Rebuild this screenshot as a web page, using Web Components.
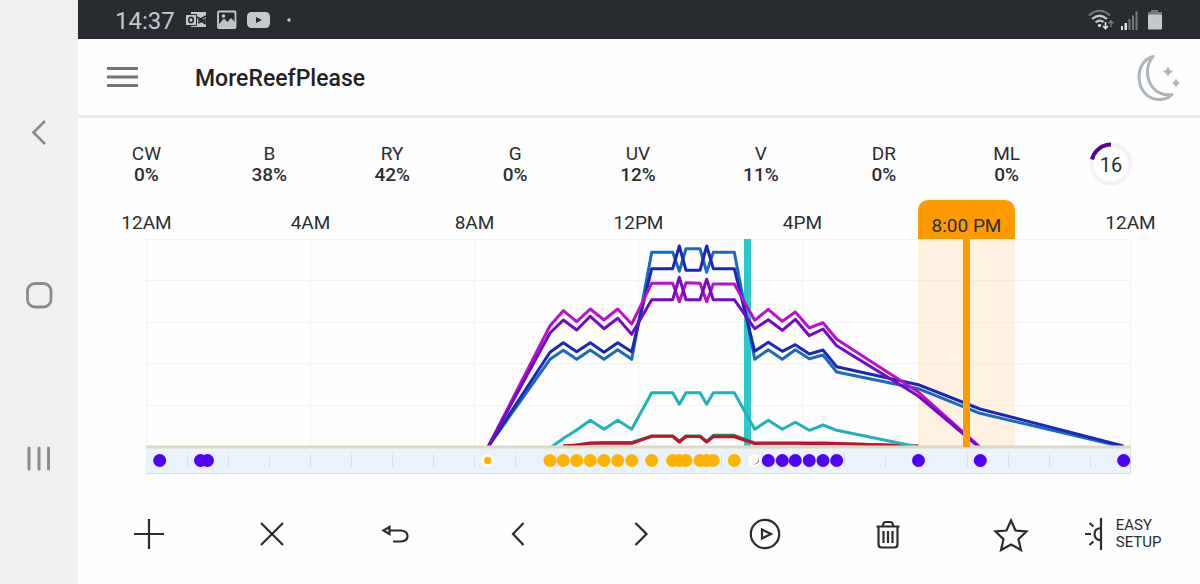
<!DOCTYPE html>
<html lang="en">
<head>
<meta charset="utf-8">
<meta name="viewport" content="width=device-width, initial-scale=1">
<title>MoreReefPlease</title>
<style>
  body { margin: 0; font-family: Roboto, "Liberation Sans", sans-serif; color: #2b2d31; background: #fefefe; }
</style>
</head>
<body>
<reef-app></reef-app>

<script>
const RESET = `
  *, *::before, *::after { box-sizing: border-box; }
  button { appearance: none; border: 0; background: none; padding: 0; margin: 0; font: inherit; color: inherit; cursor: pointer; }
  svg { display: block; }
`;

function define(name, html, after) {
  const template = document.createElement('template');
  template.innerHTML = html;
  customElements.define(name, class extends HTMLElement {
    constructor() {
      super();
      this.attachShadow({ mode: 'open' }).append(template.content.cloneNode(true));
    }
    connectedCallback() { if (after) after(this.shadowRoot, this); }
  });
}

/* System navigation rail */
define('nav-rail', `
<style>${RESET}
  :host { display: block; background: #f0f0f0; }
  nav { height: 100%; display: flex; flex-direction: column; align-items: center; justify-content: center; gap: 115px; padding-top: 5px; }
  button { width: 48px; height: 48px; display: grid; place-items: center; }
  svg { fill: none; stroke: #8b8b8b; }
</style>
<nav aria-label="System">
  <button aria-label="Back"><svg width="48" height="48" viewBox="0 0 48 48" stroke-width="2.6"><path d="M30 13 18.500 24.500 30 36"/></svg></button>
  <button aria-label="Home"><svg width="48" height="48" viewBox="0 0 48 48" stroke-width="2.800"><rect x="12.500" y="12.500" width="23.500" height="23.500" rx="7.500"/></svg></button>
  <button aria-label="Recent apps"><svg width="48" height="48" viewBox="0 0 48 48" stroke-width="3" stroke-linecap="round"><path d="M14 14V35M24 14V35M33.500 14V35"/></svg></button>
</nav>`);

/* Phone status bar */
define('status-bar', `
<style>${RESET}
  :host { display: flex; align-items: center; justify-content: space-between; height: 39px; padding: 0 35px 0 37px; background: #282b30; color: #c6c8ca; }
  .side { display: flex; align-items: center; gap: 10px; }
  time { font-size: 24px; line-height: 28px; padding-top: 3px; }
  .signals { gap: 5px; }
</style>
<div class="side">
  <time>14:37</time>
  <svg width="22" height="20" viewBox="0 0 22 20"><path fill="#c6c8ca" d="M6 2H21V17H6z"/><path d="M12 7 21 12M13 13 21 9" stroke="#282b30" stroke-width="1.500" fill="none"/><path d="M21 6 14 10 21 14" stroke="#282b30" stroke-width="1.800" fill="none"/><path fill="#c6c8ca" stroke="#282b30" d="M.5 4.500H11.500V15.500H.5z"/><ellipse cx="6" cy="10" rx="2.300" ry="2.600" fill="none" stroke="#282b30" stroke-width="1.600"/></svg>
  <svg width="20" height="20" viewBox="0 0 20 20"><rect x="1" y="1.500" width="17.500" height="16.500" rx="1" fill="none" stroke="#c6c8ca" stroke-width="1.800"/><path fill="#c6c8ca" d="M2 14 7 8.500 10.500 12 14 8 18 12V17H2z" opacity=".95"/><circle cx="6.500" cy="6" r="1.800" fill="#c6c8ca"/></svg>
  <svg width="23" height="20" viewBox="0 0 23 20"><rect y="2" width="23" height="16" rx="4.500" fill="#c6c8ca"/><path fill="#282b30" d="M9 7V13L15 10z"/></svg>
  <svg width="20" height="20" viewBox="0 0 20 20"><circle cx="9" cy="10" r="1.700" fill="#c6c8ca"/></svg>
</div>
<div class="side signals">
  <svg width="27" height="24" viewBox="0 0 27 24" fill="none"><path d="M1 7.500Q11.500-2 22 7.500" stroke="#77797c" stroke-width="2"/><path d="M4 11Q11.500 4.500 19 11M7.500 14.500Q11.500 11 15.500 14" stroke="#c6c8ca" stroke-width="2.200"/><circle cx="11.500" cy="17.500" r="1.800" fill="#c6c8ca"/><path d="M17.500 14V20M15 18 17.500 20.500 20 18" stroke="#e4e4e4" stroke-width="1.600"/><path d="M23 19V14M20.500 15.500 23 13 25.500 15.500" stroke="#77797c" stroke-width="1.600"/></svg>
  <svg width="18" height="20" viewBox="0 0 18 20"><path fill="#e0e0e0" d="M1 16h2v4H1zM4.500 13h2.500v7H4.500z"/><path fill="#77797c" d="M8.500 9h2v11h-2zM12 5.500h2V20h-2zM15.500 1.500h2V20h-2z"/></svg>
  <svg width="22" height="20" viewBox="0 0 22 20"><path fill="#77797c" d="M8 0h7v2h4v3H5V2h3z"/><rect x="5" y="4.500" width="14" height="15" rx="1" fill="#c6c8ca"/></svg>
</div>`);

/* App header */
define('app-header', `
<style>${RESET}
  :host { display: flex; align-items: center; height: 79px; padding: 0 18px 0 26px; border-bottom: 3px solid #e6e8ea; }
  .menu { width: 38px; height: 40px; display: grid; place-items: center; }
  h1 { flex: 1; margin: 0 0 0 53px; padding-top: 3px; font-size: 23px; line-height: 28px; font-weight: 500; color: #232323; }
</style>
<button class="menu" aria-label="Menu"><svg width="32" height="24" viewBox="0 0 32 24" stroke="#757575" stroke-width="3"><path d="M0 3.500H31M0 12H31M0 20.500H31"/></svg></button>
<h1><slot></slot></h1>
<button aria-label="Night mode"><svg width="48" height="50" viewBox="0 0 48 50"><path d="M19 4.500C-2 10 1 48 26 47.500Q34 47 38 42.500C17 46 6 20 19 4.500z" fill="none" stroke="#abb5bb" stroke-width="3" stroke-linejoin="round"/><path fill="#abb5bb" d="M34 14Q35 18.500 39.500 19.500 35 20.500 34 25 33 20.500 28.500 19.500 33 18.500 34 14zM42 26.500Q43 30 46 31 43 32 42 35.500 41 32 38 31 41 30 42 26.500z"/></svg></button>`);

/* One colour channel with its level */
define('channel-level', `
<style>${RESET}
  :host { display: flex; flex-direction: column; align-items: center; font-size: 19px; line-height: 21px; }
  b { font-weight: 500; }
</style>
<span id="name"></span><b><slot></slot></b>`,
(root, host) => { root.getElementById('name').textContent = host.getAttribute('name'); });

/* Ring with the number of points left */
define('point-ring', `
<style>${RESET}
  :host { display: grid; place-items: center; width: 44px; height: 44px; font-size: 20px; line-height: 24px; }
  svg, span { grid-area: 1 / 1; }
  span { padding-top: 2px; }
</style>
<svg width="44" height="44" viewBox="0 0 44 44" fill="none" stroke-width="4"><circle cx="22" cy="22" r="19.500" stroke="#f2f2f8"/><path d="M3 17.500A19.500 19.500 0 0 1 22 2.500" stroke="#54009b"/></svg>
<span><slot></slot></span>`);

define('channel-row', `
<style>${RESET}
  :host { display: grid; grid-template-columns: repeat(9, 1fr); align-items: center; padding: 24px 9px 0 7px; }
  point-ring { margin-left: 21px; }
</style>
<channel-level name="CW">0%</channel-level>
<channel-level name="B">38%</channel-level>
<channel-level name="RY">42%</channel-level>
<channel-level name="G">0%</channel-level>
<channel-level name="UV">12%</channel-level>
<channel-level name="V">11%</channel-level>
<channel-level name="DR">0%</channel-level>
<channel-level name="ML">0%</channel-level>
<point-ring>16</point-ring>`);

/* Day schedule: the levels of every channel over 24 hours */
const X = [342, 404, 417.3, 430.7, 444.3, 458, 471.7, 485.7, 505.7, 526.7, 533.3, 540, 554, 560.7, 567.3, 588.3, 608.7, 622.3, 636.3, 649.3, 663.3, 677, 690.7, 772.3, 834, 977.3];
const SERIES = [
  ['#2a8a4a', [, , 207, 206, 204, 203.5, 203.5, 203.5, 197, 197, 202.5, 197, 197, 202.5, 196.3, 196.3, 204, 204, 204, 204, 204, 204, 204.5, 207]],
  ['#c8102e', [, , 207, 206, 204.3, 204.3, 204.3, 204.3, 197.3, 197.3, 203, 197.5, 197.5, 203, 197.8, 197.8, 204.5, 204.3, 204.3, 204.3, 204.5, 204.3, 204.5, 207]],
  ['#22b0ba', [, 209, 199.5, 191, 181.3, 190.3, 181.3, 190.3, 153.7, 153.7, 165.3, 153.7, 153.7, 165.3, 153.7, 153.7, 190.3, 181.3, 190.3, 183.3, 191.3, 186, 191.3, 208]],
  ['#1a6abf', [208, 120.3, 111.3, 120.3, 111, 120.3, 110.7, 120.3, 13.3, 13.3, 32.3, 9.7, 9.7, 33.3, 13.3, 13.3, 120.3, 110.7, 120.3, 110.7, 119.7, 116, 133, 149.7, 174.3, 208]],
  ['#1929b5', [208, 113.3, 103.7, 112.7, 103.7, 113.3, 103.7, 112.7, 29.7, 29.7, 7, 31.3, 31.3, 7, 29.7, 29.7, 112.3, 103.3, 112.3, 105.7, 115, 111, 127.7, 145.7, 170, 207]],
  ['#b912c8', [208, 86.7, 71.7, 82.7, 70, 81, 70, 85, 44.3, 44.3, 62.7, 43.7, 44.3, 62.7, 45, 45, 81.3, 70.3, 82.3, 73, 89, 83.7, 100.3, 153, 208]],
  ['#7509c9', [208, 94, 81, 91, 77.3, 89.7, 79.3, 95.3, 60.7, 60.7, 38.3, 60.7, 60.7, 40.3, 60.7, 60.7, 89.7, 80.7, 91.3, 80.3, 96.7, 90, 106.7, 157, 209]],
];
const DAY = [404, 417.3, 430.7, 444.3, 458, 471.7, 485.7, 505.7, 526.7, 533.3, 540, 554, 560.7, 567.3, 588.3];
const NIGHT = [13.7, 54.5, 61.5, 622.3, 636.3, 649.3, 663.3, 677, 690.7, 772.5, 834.3, 977.7];

define('day-chart', `
<style>${RESET}
  :host { display: block; }
  .hours { display: flex; justify-content: space-between; align-items: flex-end; padding: 0 21px 0 20px; margin-top: 14px; font-size: 19px; line-height: 22px; }
  .hours > * { width: 97px; height: 39px; text-align: center; padding-top: 12px; white-space: nowrap; }
  button { background: #ff9b00; border-radius: 10px 10px 0 0; line-height: 22px; }
  .plot { padding: 0 69px 0 68px; }
  svg { width: 100%; height: auto; overflow: visible; }
</style>
<div class="hours"><span>12AM</span><span>4AM</span><span>8AM</span><span>12PM</span><span>4PM</span><button>8:00 PM</button><span>12AM</span></div>
<div class="plot"><svg viewBox="0 0 985 236" role="img" aria-label="Channel levels over the day"></svg></div>`,
root => {
  const bars = (xs, y1, y2) => xs.map(x => `M${x} ${y1}V${y2}`).join('');
  const dots = (xs, color) => xs.map(x => `<circle cx="${x}" cy="221.500" r="6.500" fill="${color}"/>`).join('');
  const hours = Array.from({ length: 23 }, (_, i) => Math.round((i + 1) * 41.04) + .5);
  const lines = SERIES.map(([color, ys]) => {
    const points = [];
    ys.forEach((y, i) => points.push(`${X[i]},${y}`));
    return `<polyline points="${points.join(' ')}" stroke="${color}"/>`;
  }).join('');
  root.querySelector('svg').innerHTML = `
    <path d="M0 .5H985M0 41.500H985M0 83.500H985M0 124.500H985M0 166.500H985${bars([.5, 164.5, 328.5, 492.5, 656.5, 984.5], 0, 207)}" stroke="#f3f3f4" fill="none"/>
    <rect x="772" width="97" height="207" fill="#fef1df"/>
    <path d="M772 41.500H869M772 83.500H869M772 124.500H869M772 166.500H869" stroke="#f6e9da"/>
    <rect x="598" width="7" height="207" fill="#2bcaca"/>
    <clipPath id="area"><rect width="985" height="207"/></clipPath>
    <g fill="none" stroke-width="3" stroke-linejoin="round" clip-path="url(#area)">${lines}</g>
    <rect y="209" width="985" height="26" fill="#e9f2fd"/>
    <path d="M0 234.500H984.500V209" fill="none" stroke="#d5e1ee"/>
    <path d="${bars(hours, 215, 228)}" stroke="#d5e0ec"/>
    <rect y="206.500" width="985" height="3" fill="#dcdac6"/>
    <rect x="817" width="7" height="208" fill="#ff9b00"/>
    <circle cx="341.700" cy="221.500" r="6.500" fill="#fffdf6"/><circle cx="341.700" cy="221.500" r="3.700" fill="#ffb000"/>
    ${dots(DAY, '#ffb300')}
    <circle cx="608.500" cy="221.500" r="6.500" fill="#fff"/><path d="M611.500 217A5 5 0 0 1 604.500 224 5.500 5.500 0 0 0 613 222.500Q613.500 219 611.500 217z" fill="#5a3fd8"/>
    ${dots(NIGHT, '#5000fa')}`;
});

/* Editing actions */
define('tool-bar', `
<style>${RESET}
  :host { display: grid; grid-template-columns: repeat(9, 1fr); align-items: center; padding: 0 4px 0 9px; margin-top: 34px; }
  button { justify-self: center; height: 50px; display: flex; align-items: center; }
  svg { fill: none; stroke: #2a2b2f; stroke-width: 2.2; }
  .setup { justify-self: start; gap: 8px; margin-left: 11px; font-size: 15px; line-height: 17px; text-align: left; }
</style>
<button aria-label="Add"><svg width="40" height="40" viewBox="0 0 40 40"><path d="M5 20H35M20 5V35"/></svg></button>
<button aria-label="Remove"><svg width="40" height="40" viewBox="0 0 40 40"><path d="M9 9 31 31M31 9 9 31"/></svg></button>
<button aria-label="Undo"><svg width="40" height="40" viewBox="0 0 40 40"><path d="M15 16.500H26Q32.500 17 32.500 22T26 27.500H18M14.500 13 8.500 16.500 14.500 20z"/></svg></button>
<button aria-label="Previous"><svg width="40" height="40" viewBox="0 0 40 40"><path d="M25.500 9 15 20 25.500 31"/></svg></button>
<button aria-label="Next"><svg width="40" height="40" viewBox="0 0 40 40"><path d="M14.500 9 25.500 20 14.500 31"/></svg></button>
<button aria-label="Play"><svg width="40" height="40" viewBox="0 0 40 40"><circle cx="20" cy="20" r="14.200"/><path d="M17 15.500V24.500L26 20z"/></svg></button>
<button aria-label="Delete"><svg width="40" height="40" viewBox="0 0 40 40"><path d="M8.500 12.500H31.500M10.500 12.500V30Q10.500 33.500 13.500 33.500H26.500Q29.500 33.500 29.500 30V12.500M15 12Q15 8 18 8H22Q25 8 25 12M15.500 17V29M20 17V29M24.500 17V29"/></svg></button>
<button aria-label="Favourite"><svg width="40" height="40" viewBox="0 0 40 40"><path d="M20 6.500 24.500 16.500 35.500 17.500 27.500 25.200 30 36 20 30.500 10 36 12.500 25.200 4.500 17.500 15.500 16.500z"/></svg></button>
<button class="setup"><svg width="24" height="34" viewBox="0 0 24 34"><path d="M17 1V33M17 11Q10.500 11.500 10.500 17T17 23.500M1 17H7M5.500 6 9.500 9.500M5.500 28 9.500 24.500"/></svg><span>EASY<br>SETUP</span></button>`);

define('reef-app', `
<style>${RESET}
  :host { display: grid; grid-template-columns: 78px minmax(0, 1fr); min-height: 100vh; }
</style>
<nav-rail></nav-rail>
<main>
  <status-bar></status-bar>
  <app-header>MoreReefPlease</app-header>
  <channel-row></channel-row>
  <day-chart></day-chart>
  <tool-bar></tool-bar>
</main>`);
</script>
</body>
</html>
